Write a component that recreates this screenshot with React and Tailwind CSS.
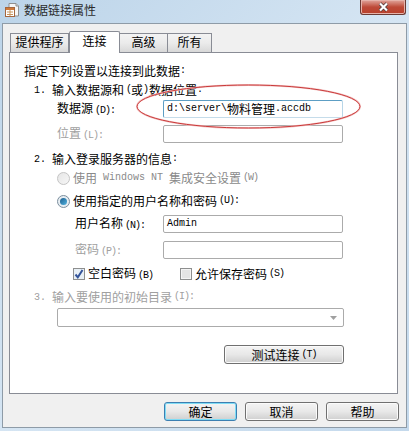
const FONT = { fontFamily: '"Noto Sans CJK SC","Liberation Sans",sans-serif' };

function L({ children }) {
  return <span className="font-['Liberation_Mono'] text-[10px]">{children}</span>;
}

function K({ children }) {
  return <span className="font-['Liberation_Mono'] text-[10px] tracking-[-1px] ml-[2px]">{children}</span>;
}

function Tab({ label, active, w }) {
  return active ? (
    <div className={`${w} h-[22px] -mb-px relative z-10 bg-white border border-b-0 border-[#898c95] rounded-t-[2px] flex justify-center items-start text-[12px] leading-[17px] text-black`}>
      {label}
    </div>
  ) : (
    <div className={`${w} h-[19px] bg-gradient-to-b from-[#f3f3f3] via-[#ebebeb] to-[#d8d8d8] border border-l-0 first:border-l border-b-0 border-[#898c95] flex justify-center items-start text-[12px] leading-[16px] text-black`}>
      {label}
    </div>
  );
}

function Field({ value, active }) {
  return (
    <div className={`w-[180px] h-[18px] rounded-[2px] border bg-white flex items-center pl-[3px] text-[12px] text-black ${active ? "border-[#5d9ec4] border-b-[#c5dcea] border-r-[#b8d6e8]" : "border-[#ababab]"}`}>
      {value}
    </div>
  );
}

function Btn({ children, w, primary }) {
  return (
    <div className={`${w} h-[19px] rounded-[3px] border flex items-center justify-center text-[12px] text-black bg-gradient-to-b from-[#f4f4f4] via-[#e8e8e8] to-[#cfcfcf] ${primary ? "border-[#3c7fb1] shadow-[inset_0_0_0_1px_#7fdcf5]" : "border-[#707070] shadow-[inset_0_0_0_1px_#fbfbfb]"}`}>
      {children}
    </div>
  );
}

function Row({ h, pl, children, className = "" }) {
  return (
    <div className={`flex items-center ${h} ${pl} ${className}`}>{children}</div>
  );
}

export default function App() {
  return (
    <div style={FONT} className="w-[409px] h-[431px] flex flex-col bg-gradient-to-br from-[#bcd4e9] via-[#d5e5f3] to-[#c4d9ec] overflow-hidden select-none">
      {/* title bar */}
      <div className="h-[23px] flex items-start relative shrink-0">
        <svg width="16" height="16" viewBox="0 0 16 16" className="ml-[4px] mt-[2px]">
          <path d="M5 1.5h7l2.5 2.5v10H5z" fill="#f6f6f6" stroke="#8f8f8f" />
          <path d="M12 1.5V4h2.5" fill="#ddd" stroke="#8f8f8f" />
          <rect x="1.5" y="5.5" width="9" height="9" fill="#fff" stroke="#a5673f" />
          <rect x="2" y="6" width="8" height="2" fill="#cf7a3a" />
          <path d="M3 10h6M3 12.5h6M6 8v6" stroke="#c9955f" />
        </svg>
        <div className="ml-[4px] mt-[2px] text-[12px] leading-[16px] text-[#2b2b2b]">数据链接属性</div>
        <div className="absolute left-[360px] top-0 w-[46px] h-[15px] rounded-b-[3px] border border-t-0 border-[#6b3a34] bg-gradient-to-b from-[#e0a69e] via-[#bd4a38] to-[#b9402c] shadow-[inset_0_0_0_1px_#e6b3aa] flex items-center justify-center">
          <svg width="11" height="10" viewBox="0 0 11 10">
            <path d="M2 1.5l7 7M9 1.5l-7 7" stroke="#4a3a3a" strokeWidth="3.6" />
            <path d="M2 1.5l7 7M9 1.5l-7 7" stroke="#fff" strokeWidth="2.2" />
          </svg>
        </div>
      </div>

      {/* client */}
      <div className="ml-[2px] w-[405px] h-[405px] bg-[#f0f0f0] border border-[#8e9ba7] pl-[6px] flex flex-col relative shrink-0">
        {/* tabs */}
        <div className="flex items-end h-[20px] mt-[8px] pl-[1px] shrink-0">
          <Tab label="提供程序" w="w-[59px]" />
          <Tab label="连接" active w="w-[51px]" />
          <Tab label="高级" w="w-[48px]" />
          <Tab label="所有" w="w-[44px]" />
        </div>

        {/* panel */}
        <div className="w-[389px] h-[342px] bg-white border border-[#898c95] shrink-0 text-[12px] leading-[16px] text-black flex flex-col">
          <Row h="h-[17px] mt-[9px]" pl="pl-[14px]">指定下列设置以连接到此数据<L>:</L></Row>
          <Row h="h-[17px] mt-[2px]" pl="pl-[24px]">
            <span className="w-[18px]"><L>1.</L></span>输入数据源和<K>(</K>或<L>)</L>数据位置<L>:</L>
          </Row>
          <Row h="h-[18px] mt-[2px]" pl="pl-[47px]">
            <span className="w-[106px]">数据源<K>(D):</K></span>
            <Field value={<><L>d:\server\</L>物料管理<L>.accdb</L></>} active />
          </Row>
          <Row h="h-[18px] mt-[7px]" pl="pl-[47px]">
            <span className="w-[106px] text-[#a0a0a0]">位置<K>(L):</K></span>
            <Field value="" />
          </Row>
          <Row h="h-[17px] mt-[7px]" pl="pl-[24px]">
            <span className="w-[18px]"><L>2.</L></span>输入登录服务器的信息<L>:</L>
          </Row>
          <Row h="h-[18px] mt-[2px]" pl="pl-[47px]" className="text-[#8a8a8a]">
            <span className="w-[13px] h-[13px] rounded-full border border-[#c4c4c4] bg-gradient-to-br from-[#e6e6e6] to-[#f6f6f6] mr-[3px]" />
            使用<L>&nbsp;Windows NT&nbsp;</L>集成安全设置<K>(W)</K>
          </Row>
          <Row h="h-[18px] mt-[5px]" pl="pl-[47px]">
            <span className="w-[13px] h-[13px] rounded-full border border-[#7d8f9e] bg-[#e6edf2] mr-[3px] flex items-center justify-center">
              <span className="w-[7px] h-[7px] rounded-full bg-gradient-to-br from-[#1f5f8f] to-[#4fb2df]" />
            </span>
            使用指定的用户名称和密码<K>(U):</K>
          </Row>
          <Row h="h-[18px] mt-[5px]" pl="pl-[65px]">
            <span className="w-[88px]">用户名称<K>(N):</K></span>
            <Field value={<L>Admin</L>} />
          </Row>
          <Row h="h-[18px] mt-[8px]" pl="pl-[65px]">
            <span className="w-[88px] text-[#a0a0a0]">密码<K>(P):</K></span>
            <Field value="" />
          </Row>
          <Row h="h-[18px] mt-[6px]" pl="pl-[63px]">
            <span className="w-[12px] h-[12px] border border-[#8e8f8f] bg-[#e8f0f6] mr-[3px] flex items-center justify-center">
              <svg width="10" height="10" viewBox="0 0 10 10">
                <path d="M1.5 5.5l2.3 2.8L8.5 1" fill="none" stroke="#34549a" strokeWidth="2" />
              </svg>
            </span>
            <span className="w-[92px]">空白密码<K>(B)</K></span>
            <span className="w-[12px] h-[12px] border border-[#8e8f8f] bg-[#e4e4e4] shadow-[inset_0_0_0_1px_#f4f4f4] mr-[3px]" />
            允许保存密码<K>(S)</K>
          </Row>
          <Row h="h-[17px] mt-[5px]" pl="pl-[24px]" className="text-[#a0a0a0]">
            <span className="w-[18px]"><L>3.</L></span>输入要使用的初始目录<K>(I):</K>
          </Row>
          <Row h="h-[19px] mt-[3px]" pl="pl-[47px]">
            <div className="w-[287px] h-[19px] rounded-[2px] border border-[#ababab] bg-white flex items-center justify-end pr-[6px]">
              <svg width="7" height="4" viewBox="0 0 7 4"><path d="M0 0h7L3.5 4z" fill="#a0a0a0" /></svg>
            </div>
          </Row>
          <Row h="h-[19px] mt-[18px]" pl="pl-[214px]">
            <Btn w="w-[120px]">测试连接<K>(T)</K></Btn>
          </Row>
        </div>

        {/* buttons */}
        <div className="flex mt-[8px] pl-[155px] shrink-0">
          <Btn w="w-[73px]" primary>确定</Btn>
          <div className="w-[8px]" />
          <Btn w="w-[73px]">取消</Btn>
          <div className="w-[8px]" />
          <Btn w="w-[73px]">帮助</Btn>
        </div>

        {/* hand-drawn annotation */}
        <svg width="240" height="60" viewBox="0 0 240 60" className="absolute left-[128px] top-[54px] pointer-events-none">
          <ellipse cx="117.5" cy="28.5" rx="111.5" ry="21.5" fill="none" stroke="#f5c8c8" strokeWidth="2" />
          <ellipse cx="117.5" cy="28.5" rx="111.5" ry="21.5" fill="none" stroke="#c93a3a" strokeWidth="1" />
        </svg>
      </div>
    </div>
  );
}
